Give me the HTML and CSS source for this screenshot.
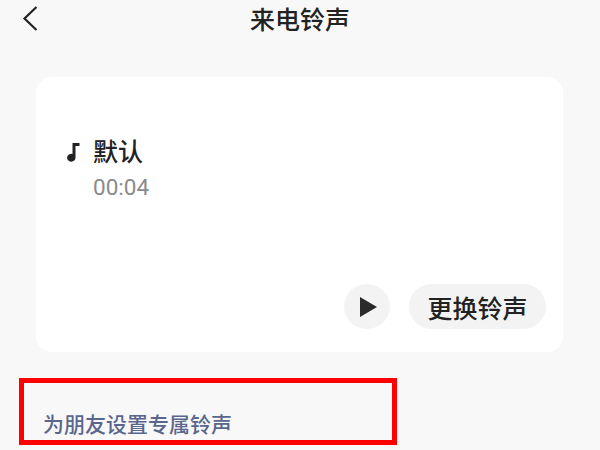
FILE: index.html
```html
<html>

<head>
	<title>来电铃声</title>
	<meta name="viewport" content="width=device-width, initial-scale=1.0">

	<link rel="stylesheet" href="styles.css">
</head>

<body>
	<div class="header">
		<svg class="back-icon" width="18" height="26" viewBox="0 0 18 26">
			<path d="M15.5 2 L3.5 13.5 L15.5 25" fill="none" stroke="#222" stroke-width="2.2" />
		</svg>
		<h1>来电铃声</h1>
	</div>

	<div class="card">
		<div class="ringtone">
			<svg class="note-icon" width="13" height="20" viewBox="0 0 13 20">
				<path d="M5.5 1 H12.5 V4 H8.5 V15.5 A4.2 3.9 0 1 1 5.5 12 Z" fill="#222" />
			</svg>
			<div>
				<div class="ringtone-name">默认</div>
				<div class="ringtone-time">00:04</div>
			</div>
		</div>
		<div class="actions">
			<button class="play-btn">
				<svg width="18" height="20" viewBox="0 0 18 20">
					<path d="M1 0 L18 10 L1 20 Z" fill="#2a2a2a" />
				</svg>
			</button>
			<button class="change-btn">更换铃声</button>
		</div>
	</div>

	<p class="friend-link">为朋友设置专属铃声</p>

	<div class="highlight"></div>
</body>

</html>
```

FILE: styles.css
```css
body {
	background-color: #f8f8f8;
	font-family: "Noto Sans CJK SC", "Noto Sans", sans-serif;
	color: #222;
	width: 600px;
	height: 450px;
	margin: 0;
	overflow: hidden;
	position: relative;
}

.header {
	display: flex;
	align-items: flex-start;
	justify-content: center;
	height: 38px;
	position: relative;
}

h1 {
	font-size: 25px;
	font-weight: 500;
	line-height: 36px;
	margin: 0;
}

.back-icon {
	position: absolute;
	left: 21px;
	top: 5px;
}

.card {
	background-color: #fff;
	border-radius: 16px;
	box-sizing: border-box;
	display: flex;
	flex-direction: column;
	justify-content: space-between;
	margin: 39px 37px 0 36px;
	padding: 56px 17px 23px 31px;
	height: 275px;
}

.ringtone {
	display: flex;
	align-items: flex-start;
	gap: 13px;
}

.note-icon {
	margin-top: 9px;
}

.ringtone-name {
	font-size: 25px;
	font-weight: 500;
	line-height: 34px;
}

.ringtone-time {
	color: #8a8a8a;
	font-family: Roboto, sans-serif;
	font-size: 22.5px;
	line-height: 24px;
	margin-top: 8px;
}

.actions {
	display: flex;
	justify-content: flex-end;
	gap: 19px;
}

button {
	background-color: #f3f3f3;
	border: 0;
	color: #222;
	font-family: inherit;
	height: 45px;
	padding: 0;
}

.play-btn {
	border-radius: 50%;
	display: flex;
	align-items: center;
	justify-content: center;
	padding-left: 2px;
	width: 46px;
}

.change-btn {
	border-radius: 23px;
	font-size: 25px;
	font-weight: 500;
	width: 137px;
}

.friend-link {
	color: #5a668c;
	font-size: 21px;
	font-weight: 500;
	line-height: 30px;
	margin: 56px 0 0 43px;
}

.highlight {
	border: 5px solid #f00;
	box-sizing: border-box;
	position: absolute;
	left: 19px;
	top: 378px;
	width: 378px;
	height: 67px;
}
```
